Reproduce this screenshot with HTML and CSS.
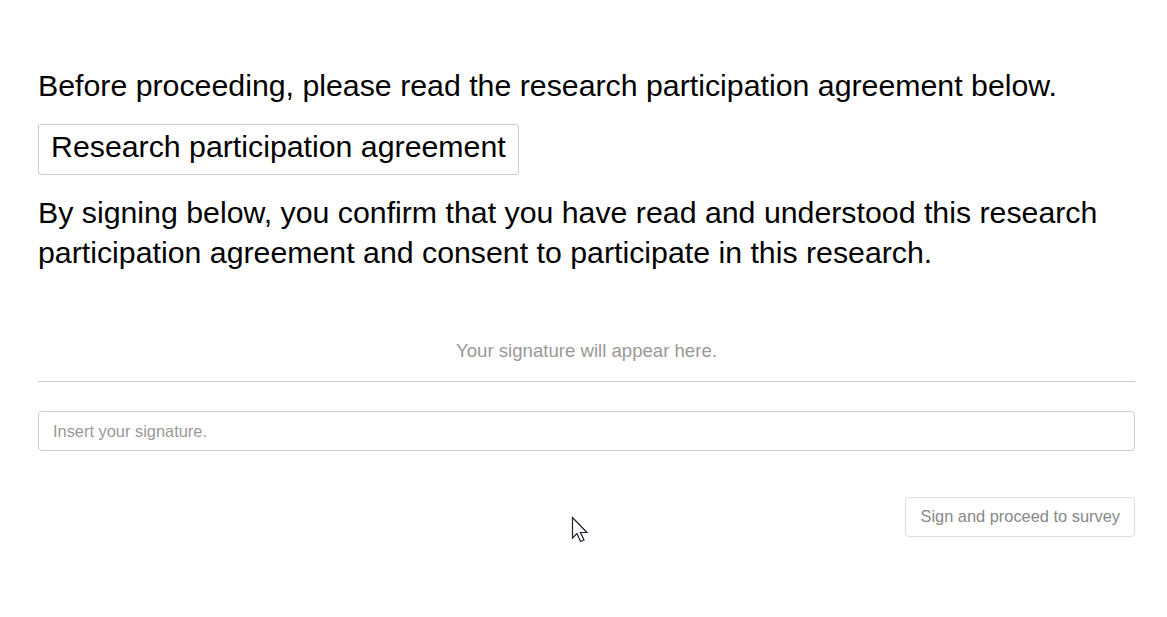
FILE: index.html
```html
<!DOCTYPE html>
<html lang="en">
<head>
    <meta charset="UTF-8">
    <meta name="viewport" content="width=device-width, initial-scale=1.0">
    <title>Research Agreement</title>
    <link rel="stylesheet" href="styles.css">
</head>
<body>

    <div class="agreement-container">
        <p class="agreement-text">Before proceeding, please read the research participation agreement below.</p>
        <button class="agreement-link">Research participation agreement</button>
        <p class="agreement-text consent">By signing below, you confirm that you have read and understood this research participation agreement and consent to participate in this research.</p>

        <div class="signature-preview">Your signature will appear here.</div>
        <input class="signature-input" type="text" placeholder="Insert your signature.">

        <div class="actions">
            <button class="sign-button" disabled>Sign and proceed to survey</button>
        </div>
    </div>

    <svg class="cursor" width="20" height="30" viewBox="0 0 20 30">
        <path d="M1.5 1.5 L1.5 22 L6 17.5 L9.5 25.5 L13 24 L9.5 16.5 L16 16.5 Z" fill="#fff" stroke="#1a2233" stroke-width="1.2" stroke-linejoin="miter"/>
    </svg>

</body>
</html>
```

FILE: styles.css
```css
body {
    margin: 0;
    font-family: "Liberation Sans", Arial, sans-serif;
    background-color: #fff;
    color: #000;
}

.agreement-container {
    width: 1097px;
    margin-left: 38px;
    padding-top: 66px;
}

.agreement-text {
    margin: 0;
    font-size: 30.3px;
    line-height: 40px;
}

.consent {
    margin-top: 18px;
}

.agreement-link {
    display: block;
    margin-top: 18px;
    height: 51px;
    padding: 0 12px 5px;
    font-family: inherit;
    font-size: 30.3px;
    color: #000;
    background-color: #fff;
    border: 1px solid #ccc;
    border-radius: 3px;
    cursor: pointer;
}

.signature-preview {
    margin-top: 63px;
    padding-bottom: 15px;
    border-bottom: 1px solid #ccc;
    font-size: 18.6px;
    line-height: 30px;
    text-align: center;
    color: #999;
}

.signature-input {
    display: block;
    box-sizing: border-box;
    width: 100%;
    height: 40px;
    margin-top: 29px;
    padding: 0 14px;
    font-family: inherit;
    font-size: 16.4px;
    border: 1px solid #ccc;
    border-radius: 4px;
    outline: none;
}

.signature-input::placeholder {
    color: #999;
}

.actions {
    display: flex;
    justify-content: flex-end;
    margin-top: 46px;
}

.sign-button {
    height: 40px;
    padding: 0 14px 2px;
    font-family: inherit;
    font-size: 16.4px;
    color: #888;
    background-color: #fff;
    border: 1px solid #ddd;
    border-radius: 4px;
}

.cursor {
    position: absolute;
    left: 571px;
    top: 516px;
}
```
